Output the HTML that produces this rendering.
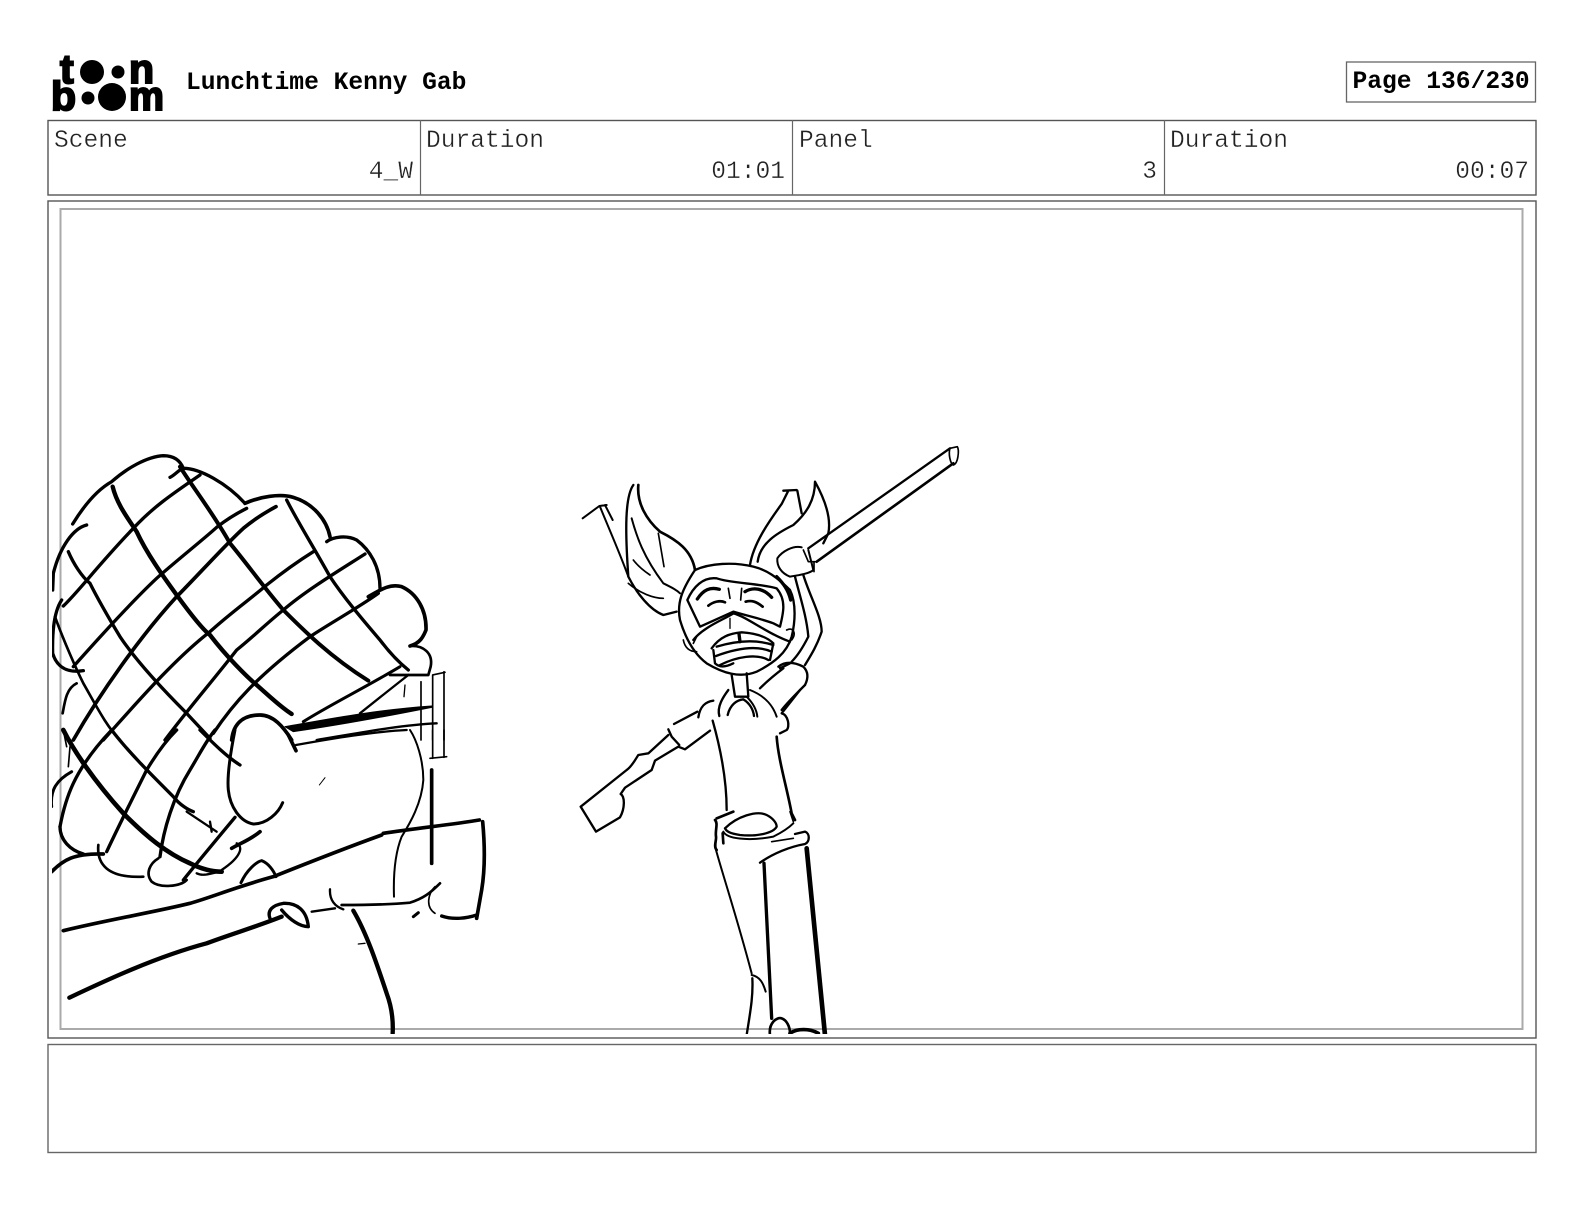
<!DOCTYPE html>
<html>
<head>
<meta charset="utf-8">
<title>Lunchtime Kenny Gab</title>
<style>
html,body{margin:0;padding:0;background:#fff;width:1584px;height:1224px;overflow:hidden}
svg{position:absolute;left:0;top:0;display:block}
.t{font-family:"Liberation Mono",monospace;font-size:24.6px;fill:#222;stroke:#fff;stroke-width:.35px;paint-order:normal}
.b{font-family:"Liberation Mono",monospace;font-size:24.6px;font-weight:bold;fill:#000}
.l{font-family:"Liberation Sans",sans-serif;font-size:41px;font-weight:bold;fill:#000;stroke:#000;stroke-width:2}
.s{fill:none;stroke:#000;stroke-linecap:round;stroke-linejoin:round}
</style>
</head>
<body>
<svg width="1584" height="1224" viewBox="0 0 1584 1224" xmlns="http://www.w3.org/2000/svg">
<defs><clipPath id="c"><rect x="52" y="300" width="1460" height="734"/></clipPath></defs>

<!-- logo -->
<text class="l" x="60" y="83">t</text>
<circle cx="92" cy="72" r="12"/>
<circle cx="118" cy="72" r="6.5"/>
<text class="l" x="129" y="83">n</text>
<text class="l" x="51" y="110">b</text>
<circle cx="88" cy="98" r="6.5"/>
<circle cx="112" cy="97" r="14"/>
<text class="l" x="129" y="110" textLength="35" lengthAdjust="spacingAndGlyphs">m</text>

<text class="b" x="186" y="89">Lunchtime Kenny Gab</text>
<rect x="1346.5" y="62" width="189" height="40" fill="none" stroke="#666" stroke-width="1.3"/>
<text class="b" x="1352.5" y="88">Page 136/230</text>

<!-- header table -->
<rect x="48" y="120.5" width="1488" height="74.500" fill="none" stroke="#555" stroke-width="1.4"/>
<path d="M420.500 120V195M792.500 120V195M1164.500 120V195" stroke="#666" stroke-width="1.200" fill="none"/>
<text class="t" x="54" y="147">Scene</text>
<text class="t" x="426" y="147">Duration</text>
<text class="t" x="799" y="147">Panel</text>
<text class="t" x="1170" y="147">Duration</text>
<text class="t" x="413" y="178" text-anchor="end">4_W</text>
<text class="t" x="785" y="178" text-anchor="end">01:01</text>
<text class="t" x="1157" y="178" text-anchor="end">3</text>
<text class="t" x="1529" y="178" text-anchor="end">00:07</text>

<!-- panel -->
<rect x="48" y="201" width="1488" height="837" fill="none" stroke="#555" stroke-width="1.400"/>
<rect x="60.500" y="209" width="1462" height="820" fill="none" stroke="#aaa" stroke-width="2"/>
<!-- caption -->
<rect x="48" y="1044.500" width="1488" height="108" fill="none" stroke="#666" stroke-width="1.400"/>

<g clip-path="url(#c)">
<!-- upper hair / net -->
<g transform="translate(40,440) scale(.33333)" class="s" stroke-width="10">
<path d="M98 252C130 200 170 150 215 125C260 85 320 50 370 47C400 47 420 60 430 85"/>
<path d="M390 112C405 105 415 90 430 85C480 85 560 130 615 190"/>
<path d="M615 190C660 170 720 160 760 172C820 190 860 240 870 290" stroke-width="11"/>
<path d="M860 305C880 290 920 285 950 300C990 330 1020 380 1020 445"/>
<path d="M985 470C1020 450 1050 430 1085 440C1130 460 1160 510 1158 570C1150 590 1140 610 1110 618" stroke-width="11"/>
<path d="M1110 618C1150 615 1180 640 1172 680L1165 705L1050 705" stroke-width="8"/>
<path d="M140 255C100 265 60 320 40 400L38 450"/>
<path d="M65 480C45 510 36 560 38 640C50 680 80 700 130 692"/>
<path d="M110 730C80 745 75 780 68 820" stroke-width="8"/>
<path d="M70 498C120 450 170 380 280 265C340 200 400 160 480 105"/>
<path d="M100 680C180 590 270 490 350 415C400 370 500 290 530 262C570 230 600 215 620 205"/>
<path d="M100 900C180 760 300 590 410 470C470 410 560 310 610 265C640 240 680 215 708 200" stroke-width="11"/>
<path d="M190 900C280 800 400 660 510 575C570 520 640 470 680 435C730 395 780 360 820 335"/>
<path d="M375 900C450 800 520 720 590 630C640 590 680 550 730 510C800 450 900 390 975 342"/>
<path d="M520 880C580 790 650 710 810 590C870 550 960 500 1015 460"/>
<path d="M218 140C230 190 260 230 290 275C320 340 370 410 410 465C450 520 490 570 510 585C560 650 620 710 650 735C690 770 720 800 755 822" stroke-width="13"/>
<path d="M85 335C100 370 125 410 150 430C180 490 210 540 240 590C280 650 340 720 440 820L510 895"/>
<path d="M420 80C450 130 520 220 570 310C620 370 670 440 730 510C790 570 870 650 985 722" stroke-width="12"/>
<path d="M740 180C770 240 820 320 870 410C910 470 960 530 1020 600C1050 640 1080 670 1105 690" stroke-width="10"/>
<path d="M45 530C70 600 110 690 130 730C170 800 200 860 240 900" stroke-width="8"/>
<path d="M790 845C860 800 980 740 1080 680" stroke-width="9"/>
<path d="M960 820C1010 780 1060 740 1105 705" stroke-width="7"/>
<path d="M735 860C850 840 1000 810 1175 798L1175 802C1060 825 900 855 760 875Z" fill="#000" stroke-width="3"/>
<path d="M830 900C950 880 1080 855 1190 850" stroke-width="7"/>
<path d="M1143 725V900M1178 705V900M1212 695V900M1178 705L1215 697" stroke-width="5"/>
<path d="M1095 735L1092 770" stroke-width="4"/>
<path d="M575 900C580 850 610 825 660 825C700 825 730 860 755 900" stroke-width="11"/>
</g>
<!-- lower hair / table -->
<g transform="translate(40,730) scale(.33333)" class="s" stroke-width="10">
<path d="M60 290C75 210 100 120 215 0" stroke-width="10"/>
<path d="M85 110L90 50M70 0L80 50" stroke-width="5"/>
<path d="M200 365C240 280 290 180 320 120C350 70 380 30 410 0"/>
<path d="M360 380C370 300 400 200 450 120C480 70 500 30 525 0"/>
<path d="M70 0C100 60 160 150 250 250C320 320 380 370 450 400C490 420 520 425 545 425" stroke-width="14"/>
<path d="M215 0C260 60 330 130 400 200C420 225 445 240 460 245"/>
<path d="M440 245L530 305M510 275L515 305" stroke-width="7"/>
<path d="M480 0C520 40 560 80 600 105" stroke-width="10"/>
<path d="M585 0C575 50 560 130 565 180C570 230 600 275 640 282C680 282 715 250 728 218" stroke-width="9"/>
<path d="M745 15L768 62" stroke-width="11"/>
<path d="M768 45C880 25 1000 5 1100 0" stroke-width="7"/>
<path d="M1110 0C1130 30 1150 90 1150 150C1145 220 1110 280 1085 320C1065 370 1060 440 1062 500" stroke-width="6"/>
<path d="M1175 120V400" stroke-width="11"/>
<path d="M1170 85L1220 80M1178 0V85M1212 0V82" stroke-width="5"/>
<path d="M1030 310C1120 295 1230 285 1318 270" stroke-width="11"/>
<path d="M1328 275C1335 350 1335 420 1325 480L1310 565" stroke-width="11"/>
<path d="M1205 558C1240 570 1280 565 1310 555" stroke-width="10"/>
<path d="M70 602C200 570 350 545 450 520C520 500 590 470 700 440C800 400 900 360 1025 315" stroke-width="11"/>
<path d="M603 458C620 420 650 395 665 392C685 400 700 420 708 440" stroke-width="9"/>
<path d="M88 803C200 750 350 680 500 640C580 610 650 590 725 560" stroke-width="13"/>
<path d="M690 565C680 540 700 525 730 520C770 518 800 540 805 590C780 590 750 570 725 540" stroke-width="10"/>
<path d="M815 545L885 535M870 478C868 510 885 530 910 538" stroke-width="7"/>
<path d="M905 525C950 525 1040 525 1110 518C1150 505 1170 490 1200 460" stroke-width="8"/>
<path d="M1185 470C1165 490 1155 530 1185 550" stroke-width="5"/>
<path d="M1120 560L1135 548" stroke-width="9"/>
<path d="M940 542C980 610 1010 700 1040 790C1055 830 1060 870 1058 910" stroke-width="13"/>
<path d="M955 642L975 640" stroke-width="4"/>
<path d="M838 165L855 143" stroke-width="3"/>
<path d="M175 345C170 400 200 445 310 440" stroke-width="8"/>
<path d="M355 385C330 400 315 430 335 455C360 475 420 470 440 450" stroke-width="8"/>
<path d="M35 425C70 390 100 370 190 372" stroke-width="11"/>
<path d="M35 230C30 180 50 150 95 125" stroke-width="9"/>
<path d="M60 290C60 330 90 360 130 372" stroke-width="10"/>
<path d="M430 450C470 400 520 340 585 262" stroke-width="10"/>
<path d="M575 355C600 340 630 330 660 305" stroke-width="11"/>
<path d="M590 340C610 350 605 380 545 420" stroke-width="7"/>
<path d="M470 430C490 440 510 430 540 425" stroke-width="7"/>
</g>
<!-- character head -->
<g transform="translate(560,430) scale(.33333)" class="s" stroke-width="7">
<path d="M745 355L1170 55"/><path d="M770 395L1180 100" stroke-width="8"/>
<path d="M1170 55C1165 70 1170 100 1180 105C1195 100 1198 60 1192 50Z" stroke-width="5"/>
<path d="M725 352C700 345 665 365 652 385C650 410 665 430 690 440C720 435 750 430 760 420L745 360" stroke-width="6"/>
<path d="M730 360L745 395L765 395M762 395V425" stroke-width="5"/>
<path d="M570 405C580 340 630 270 665 222L685 182M670 182L710 180M712 182L725 250"/>
<path d="M593 395C600 340 650 310 700 285C740 250 765 210 765 155C790 200 815 260 805 310L790 340"/>
<path d="M220 165C195 200 195 300 205 440C230 490 270 540 310 555L350 545"/>
<path d="M235 165C230 220 260 270 300 305C350 330 395 360 405 420" stroke-width="8"/>
<path d="M215 265C230 320 250 380 310 460C340 475 350 480 360 490" stroke-width="6"/>
<path d="M295 310L312 410M220 390C235 410 255 425 270 435" stroke-width="5"/>
<path d="M205 460C240 490 280 505 310 505" stroke-width="5"/>
<path d="M68 265L118 228L140 225M120 230C140 280 180 370 205 440M135 225L158 270" stroke-width="6"/>
<path d="M405 420C450 400 520 395 580 410C620 420 650 440 690 480C710 520 705 580 695 620C680 670 640 700 590 725C540 745 490 730 440 700C400 670 375 620 360 570C350 520 365 480 405 420"/>
<path d="M650 440C670 460 685 480 692 510" stroke-width="10"/>
<path d="M382 510C400 470 430 440 470 445C510 460 600 460 650 475C680 510 670 550 660 590L640 580C600 565 570 560 520 545L420 590Z"/>
<path d="M412 507C430 480 450 470 478 478M555 485C580 470 610 475 635 502" stroke-width="10"/>
<path d="M445 527C460 515 480 510 495 517M557 515C575 510 590 515 608 530" stroke-width="8"/>
<path d="M505 475L510 505M545 475L542 510" stroke-width="5"/>
<path d="M400 630C430 590 500 565 520 550C560 560 620 610 690 635" stroke-width="7"/>
<path d="M370 630C375 655 390 665 410 665M400 640L410 620M680 600C700 590 710 610 695 630" stroke-width="5"/>
<path d="M455 655C480 620 510 610 545 607C590 610 620 620 640 640L630 690" stroke-width="7"/>
<path d="M460 660L465 700C480 715 500 710 520 700" stroke-width="7"/>
<path d="M470 650C520 635 580 625 640 645M468 678C530 655 590 645 635 665M480 705C530 680 590 670 625 690" stroke-width="7"/>
<path d="M537 612L540 635" stroke-width="10"/>
<path d="M510 565L510 595" stroke-width="4"/>
<path d="M515 735L525 800L565 800L560 730" stroke-width="7"/>
<path d="M705 440C720 500 740 560 745 620C730 650 710 680 695 695"/>
<path d="M730 435C750 500 785 560 785 605C770 650 750 680 735 705"/>
<path d="M655 710C680 690 710 700 730 710C745 725 745 745 735 765M660 715L690 700"/>
<path d="M600 775C620 755 650 730 670 715M735 765C710 790 680 820 665 840"/>
</g>
<!-- character body -->
<g transform="translate(560,690) scale(.33333)" class="s" stroke-width="7">
<path d="M342 102L412 65M415 82C420 50 435 35 460 32"/>
<path d="M478 78C470 50 490 20 505 0"/>
<path d="M503 75C510 45 530 30 550 28C570 40 580 60 582 78"/>
<path d="M560 20C580 40 590 60 592 80M570 0C620 20 640 50 650 80" stroke-width="6"/>
<path d="M665 70C685 75 690 110 680 120L660 130M665 70L720 0"/>
<path d="M458 92C480 170 500 270 500 360" stroke-width="7"/>
<path d="M650 140C655 210 680 290 695 370L705 390" stroke-width="8"/>
<path d="M325 135L265 190L235 195C225 210 215 230 200 240L62 350L108 425L180 382C195 355 195 320 182 312L195 293L275 240L285 212L355 170L375 178L450 122" stroke-width="7"/>
<path d="M325 118L335 140L358 165"/>
<path d="M470 385L520 365" stroke-width="8"/>
<path d="M465 390C475 400 465 420 468 440C470 450 460 470 470 480" stroke-width="8"/>
<path d="M468 480C490 560 530 680 575 850" stroke-width="6"/>
<path d="M495 415C530 380 590 360 620 375C640 385 650 400 650 410C640 430 590 440 540 435C510 430 500 425 495 415" stroke-width="7"/>
<path d="M490 425C500 445 560 455 640 440C670 425 690 410 700 400" stroke-width="6"/>
<path d="M488 430L490 460" stroke-width="8"/>
<path d="M635 455L700 445" stroke-width="5"/>
<path d="M600 518C640 490 690 470 735 462C750 455 750 430 735 425L705 432" stroke-width="7"/>
<path d="M690 365L700 395" stroke-width="5"/>
<path d="M612 520L635 985" stroke-width="10"/>
<path d="M740 475L795 1035" stroke-width="14"/>
<path d="M575 855C600 860 610 880 617 905" stroke-width="6"/>
<path d="M577 865C580 920 570 970 560 1035" stroke-width="7"/>
<path d="M630 1035C625 1000 650 980 665 985C680 990 690 1010 690 1030" stroke-width="8"/>
<path d="M690 1030C710 1015 750 1015 775 1030" stroke-width="11"/>
</g>
</g>
</svg>
</body>
</html>
